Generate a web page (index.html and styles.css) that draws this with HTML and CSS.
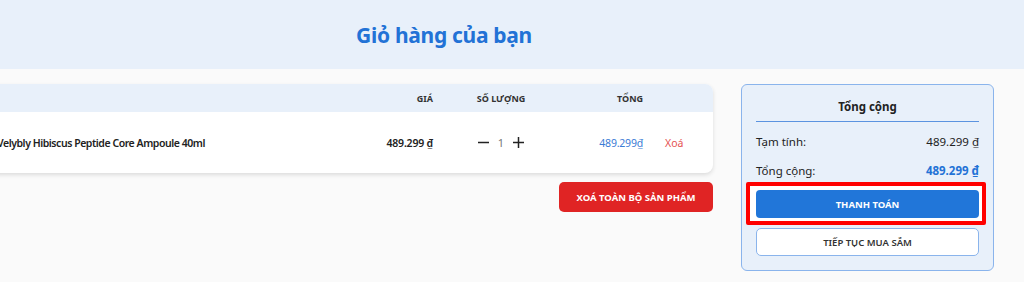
FILE: index.html
```html
<!DOCTYPE html>
<html lang="vi">
<head>
<meta charset="utf-8">
<title>Giỏ hàng</title>
<link rel="stylesheet" href="styles.css">
</head>
<body>
<header class="page-head">
  <h1 class="page-title">Giỏ hàng của bạn</h1>
</header>
<main class="cart">
  <section class="cart-left">
    <div class="cart-table">
      <div class="row head">
        <div class="c-prod"></div>
        <div class="c-price">GIÁ</div>
        <div class="c-qty">SỐ LƯỢNG</div>
        <div class="c-total">TỔNG</div>
        <div class="c-act"></div>
      </div>
      <div class="row item">
        <div class="c-prod">
          <div class="thumb"></div>
          <span class="name">Velybly Hibiscus Peptide Core Ampoule 40ml</span>
        </div>
        <div class="c-price price">489.299 ₫</div>
        <div class="c-qty qty">
          <button class="qbtn" aria-label="Giảm">
            <svg width="11" height="11" viewBox="0 0 11 11"><path d="M0 5.5H11" stroke="#222" stroke-width="1.5"/></svg>
          </button>
          <span class="qnum">1</span>
          <button class="qbtn" aria-label="Tăng">
            <svg width="11" height="11" viewBox="0 0 11 11"><path d="M0 5.5H11M5.5 0V11" stroke="#222" stroke-width="1.5"/></svg>
          </button>
        </div>
        <div class="c-total total">489.299₫</div>
        <div class="c-act"><span class="remove">Xoá</span></div>
      </div>
    </div>
    <div class="left-actions">
      <button class="btn-clear">XOÁ TOÀN BỘ SẢN PHẨM</button>
    </div>
  </section>
  <aside class="summary">
    <h2 class="sum-title">Tổng cộng</h2>
    <div class="sum-row first"><span>Tạm tính:</span><span>489.299 ₫</span></div>
    <div class="sum-row"><span>Tổng cộng:</span><span class="grand">489.299 ₫</span></div>
    <div class="highlight"><button class="btn-pay">THANH TOÁN</button></div>
    <button class="btn-continue">TIẾP TỤC MUA SẮM</button>
  </aside>
</main>
</body>
</html>
```

FILE: styles.css
```css
* { box-sizing: border-box; }
html, body { margin: 0; padding: 0; }
body {
  width: 1024px;
  height: 282px;
  overflow: hidden;
  background: #fafafa;
  font-family: "Noto Sans", "Open Sans", sans-serif;
  color: #222;
}
button { font-family: inherit; cursor: pointer; }

.page-head {
  height: 69px;
  background: #e8f0fa;
  display: flex;
  align-items: center;
  justify-content: center;
  padding-right: 136px;
}
.page-title {
  margin: 0;
  font-size: 21px;
  font-weight: 700;
  color: #2272d6;
  letter-spacing: -0.3px;
}

.cart {
  display: flex;
  justify-content: flex-end;
  align-items: flex-start;
  gap: 28px;
  padding: 15px 30px 0 0;
}
.cart-left {
  flex: 0 0 794px;
  width: 794px;
}
.cart-table {
  background: #fff;
  border-radius: 8px;
  box-shadow: 0 2px 4px rgba(0,0,0,0.12);
  overflow: hidden;
}
.row {
  display: grid;
  grid-template-columns: 434px 80px 136px 74px 70px;
  align-items: center;
}
.row.head {
  height: 28px;
  background: #e8f0fa;
  font-size: 9px;
  font-weight: 700;
  color: #333;
}
.row.item {
  height: 61px;
  font-size: 10.5px;
}
.c-price, .c-total { text-align: right; }
.c-qty { text-align: center; }
.c-act { padding-left: 22px; }
.c-prod {
  display: flex;
  align-items: center;
  gap: 12px;
  padding-left: 16px;
}
.thumb { width: 50px; height: 50px; background: #f0f0f0; border-radius: 4px; }
.name { font-weight: 600; color: #222; letter-spacing: -0.45px; }
.price { font-weight: 600; color: #222; letter-spacing: -0.2px; }
.qty {
  display: flex;
  align-items: center;
  justify-content: center;
  gap: 9px;
}
.qbtn {
  border: 0;
  background: none;
  padding: 0;
  width: 11px;
  height: 11px;
  display: flex;
}
.qnum { color: #777; font-size: 11px; }
.total { color: #3a7bd5; letter-spacing: -0.2px; }
.remove { color: #e55353; font-size: 10.5px; }

.left-actions {
  display: flex;
  justify-content: flex-end;
  margin-top: 9px;
}
.btn-clear {
  width: 154px;
  height: 30px;
  border: 0;
  border-radius: 5px;
  background: #e02424;
  color: #fff;
  font-size: 9.5px;
  font-weight: 700;
}

.summary {
  flex: 0 0 253px;
  width: 253px;
  height: 187px;
  background: #e8f0fa;
  border: 1px solid #8ab4ec;
  border-radius: 6px;
  padding: 14px;
  display: flex;
  flex-direction: column;
}
.sum-title {
  margin: 0;
  font-size: 11.5px;
  line-height: 16px;
  font-weight: 700;
  text-align: center;
  padding-bottom: 6px;
  border-bottom: 1px solid #5b93e0;
}
.sum-row {
  display: flex;
  justify-content: space-between;
  font-size: 11.5px;
  line-height: 16px;
  margin-top: 13px;
}
.sum-row.first { margin-top: 12px; }
.grand { color: #2272d6; font-weight: 700; }
.highlight {
  margin-top: 11px;
  position: relative;
}
.highlight::before {
  content: "";
  position: absolute;
  left: -10px; right: -7px; top: -8px; bottom: -7px;
  border: 4px solid #f00;
  background: #fff;
  border-radius: 2px;
}
.btn-pay {
  position: relative;
  width: 100%;
  height: 28px;
  border: 0;
  border-radius: 4px;
  background: #2176d9;
  color: #fff;
  font-size: 9.5px;
  font-weight: 700;
}
.btn-continue {
  margin-top: 10px;
  width: 100%;
  height: 29px;
  background: #fff;
  border: 1px solid #8ab4ec;
  border-radius: 5px;
  color: #333;
  font-size: 9.5px;
  font-weight: 600;
}
```
